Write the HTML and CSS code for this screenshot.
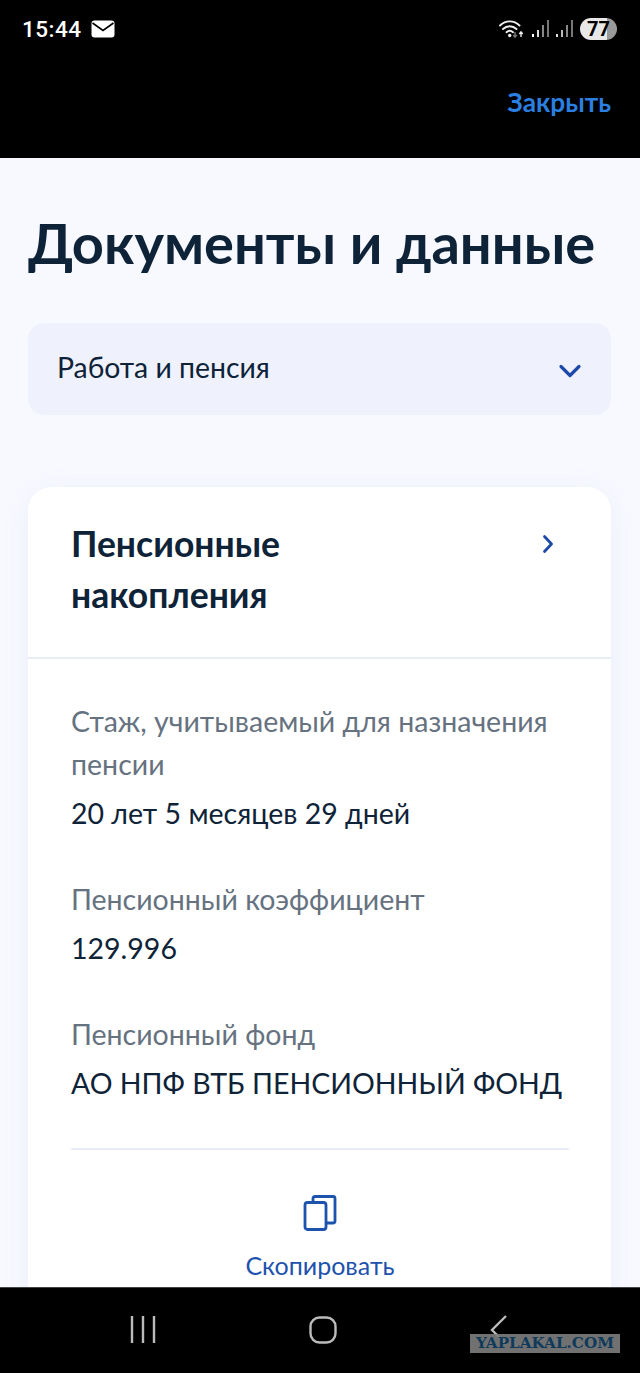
FILE: index.html
```html
<!DOCTYPE html>
<html lang="ru">
<head>
<meta charset="utf-8">
<title>Документы и данные</title>
<link rel="stylesheet" href="styles.css">
</head>
<body>
<div class="phone">
  <header class="top">
    <div class="status">
      <div class="status-left">
        <span class="time">15:44</span>
        <svg class="mail" width="24" height="18" viewBox="0 0 24 18"><rect x="0.500" y="0.500" width="23" height="17" rx="3" fill="#fff"/><path d="M1.500 3 12 10.500 22.500 3" fill="none" stroke="#000" stroke-width="1.600"/></svg>
      </div>
      <div class="status-right">
        <svg class="wifi" width="26" height="20" viewBox="0 0 26 20"><g fill="none" stroke="#eee" stroke-width="1.900" stroke-linecap="round"><path d="M1 6.500C6.500 1 15 1 20.500 6.500"/><path d="M4 10C8 6.300 13.500 6.300 17.500 10"/><path d="M7.500 13.200C9.500 11.500 12 11.500 14 13.200"/></g><circle cx="10.700" cy="16.500" r="1.700" fill="#eee"/><path d="M16 13v5M14.300 16l1.700 2.200 1.700-2.200" fill="none" stroke="#777" stroke-width="1.400"/><path d="M22 18v-5M20.300 15l1.700-2.200 1.700 2.200" fill="none" stroke="#eee" stroke-width="1.400"/></svg>
        <svg class="bars" width="17" height="18" viewBox="0 0 17 18"><rect x="0" y="14" width="2" height="3" fill="#fff"/><rect x="5" y="10" width="2" height="7" fill="#ddd"/><rect x="10" y="5" width="2" height="12" fill="#888"/><rect x="15" y="0" width="2" height="17" fill="#777"/></svg>
        <svg class="bars" width="17" height="18" viewBox="0 0 17 18"><rect x="0" y="14" width="2" height="3" fill="#ddd"/><rect x="5" y="10" width="2" height="7" fill="#bbb"/><rect x="10" y="5" width="2" height="12" fill="#888"/><rect x="15" y="0" width="2" height="17" fill="#777"/></svg>
        <span class="battery">77</span>
      </div>
    </div>
    <div class="close-row"><a class="close">Закрыть</a></div>
  </header>

  <main class="content">
    <h1 class="title">Документы и данные</h1>
    <div class="select">
      <span class="select-text">Работа и пенсия</span>
      <svg class="select-icon" width="24" height="16" viewBox="0 0 24 16"><path d="M3 3.500 12 12.500 21 3.500" fill="none" stroke="#1d4aa8" stroke-width="3.200" stroke-linecap="round" stroke-linejoin="round"/></svg>
    </div>
    <section class="card">
      <div class="card-head">
        <h2 class="card-title">Пенсионные<br>накопления</h2>
        <svg class="chev" width="12" height="20" viewBox="0 0 12 20"><path d="M2.500 2.500 9.500 10 2.500 17.500" fill="none" stroke="#1d4aa8" stroke-width="2.800" stroke-linecap="round" stroke-linejoin="round"/></svg>
      </div>
      <div class="card-body">
        <div class="item">
          <div class="label">Стаж, учитываемый для назначения пенсии</div>
          <div class="value">20 лет 5 месяцев 29 дней</div>
        </div>
        <div class="item">
          <div class="label">Пенсионный коэффициент</div>
          <div class="value">129.996</div>
        </div>
        <div class="item">
          <div class="label">Пенсионный фонд</div>
          <div class="value">АО НПФ ВТБ ПЕНСИОННЫЙ ФОНД</div>
        </div>
        <div class="copy">
          <svg width="34" height="36" viewBox="0 0 34 36"><path d="M10 6V3.500A2 2 0 0 1 12 1.500H30A2 2 0 0 1 32 3.500V26A2 2 0 0 1 30 28H23" fill="none" stroke="#1d52ad" stroke-width="2.800"/><rect x="2" y="7.500" width="21" height="27" rx="2.500" fill="#fff" stroke="#1d52ad" stroke-width="2.800"/></svg>
          <span>Скопировать</span>
        </div>
      </div>
    </section>
  </main>

  <nav class="nav">
    <svg width="26" height="27" viewBox="0 0 26 27"><path d="M2 0V27M13 0V27M24 0V27" stroke="#bbb" stroke-width="2.400" fill="none"/></svg>
    <svg width="28" height="28" viewBox="0 0 28 28"><rect x="1.500" y="1.500" width="25" height="25" rx="9" stroke="#bbb" stroke-width="2.400" fill="none"/></svg>
    <svg width="18" height="30" viewBox="0 0 18 30"><path d="M16 1 2 15 16 29" stroke="#bbb" stroke-width="2.400" fill="none"/></svg>
  </nav>
  <div class="watermark">YAPLAKAL.COM</div>
</div>
</body>
</html>
```
FILE: styles.css
```css
* { box-sizing: border-box; }
html, body { margin: 0; padding: 0; }
body { font-family: Lato, "Open Sans", sans-serif; background: #000; }
.phone { position: relative; width: 640px; height: 1373px; display: flex; flex-direction: column; overflow: hidden; }
.top { height: 158px; background: #000; flex: none; }
.status { display: flex; justify-content: space-between; align-items: center; padding: 15px 23px 0 22px; height: 42px; }
.status-left { display: flex; align-items: center; gap: 9px; }
.time { color: #fff; font-family: Roboto, sans-serif; font-size: 22.500px; font-weight: 500; letter-spacing: 0.500px; }
.status-right { display: flex; align-items: center; gap: 7px; }
.battery { width: 37px; height: 22px; border-radius: 11px; background: linear-gradient(90deg, #e8e8e8 0, #e8e8e8 72%, #999 72%); color: #000; font-family: Roboto, sans-serif; font-size: 20px; font-weight: 700; display: flex; align-items: center; justify-content: center; }
.close-row { display: flex; justify-content: flex-end; padding: 45px 29px 0 0; }
.close { color: #2a7fe0; font-size: 26.300px; font-weight: 700; line-height: 30px; }
.content { flex: 1; min-height: 0; overflow: hidden; background: #f8f9ff; padding: 0 29px 0 28px; }
.title { margin: 47px 0 0; font-size: 56px; line-height: 76px; font-weight: 700; color: #0e2338; white-space: nowrap; }
.select { margin-top: 42px; height: 92px; border-radius: 16px; background: #eff2fd; padding: 0 29px; display: flex; align-items: center; justify-content: space-between; font-size: 28.400px; color: #0e2338; }
.select-text { padding-bottom: 4px; }
.select-icon { margin-top: 3px; }
.card { margin-top: 72px; padding-bottom: 60px; background: #fff; border-radius: 24px; box-shadow: 0 4px 24px rgba(150, 165, 220, 0.12); }
.card-head { display: flex; justify-content: space-between; align-items: flex-start; padding: 31px 57px 37px 43px; border-bottom: 2px solid #e9edf5; }
.chev { margin-top: 16px; }
.card-title { margin: 0; font-size: 35.500px; line-height: 51px; font-weight: 700; color: #0e2338; }
.card-body { padding: 41px 42px 0 43px; }
.item { margin-bottom: 43px; }
.label { font-size: 28.500px; line-height: 43px; color: #66727f; }
.value { margin-top: 6px; font-size: 28.500px; line-height: 43px; color: #0e2338; white-space: nowrap; }
.copy { border-top: 2px solid #e9edf5; margin-top: 3px; padding-top: 45px; display: flex; flex-direction: column; align-items: center; gap: 18px; color: #1d52ad; font-size: 25px; line-height: 32px; }
.nav { height: 86px; flex: none; background: #000; border-top: 1px solid #444; margin-top: 0; display: flex; align-items: center; justify-content: space-between; padding: 0 132px 2px 130px; }
.watermark { position: absolute; left: 470px; top: 1334px; width: 150px; height: 19px; background: rgba(125, 125, 125, 0.9); color: #0f3a5a; font-family: "DejaVu Serif", serif; font-weight: 700; font-size: 15.200px; line-height: 19px; text-align: center; white-space: nowrap; }
```
